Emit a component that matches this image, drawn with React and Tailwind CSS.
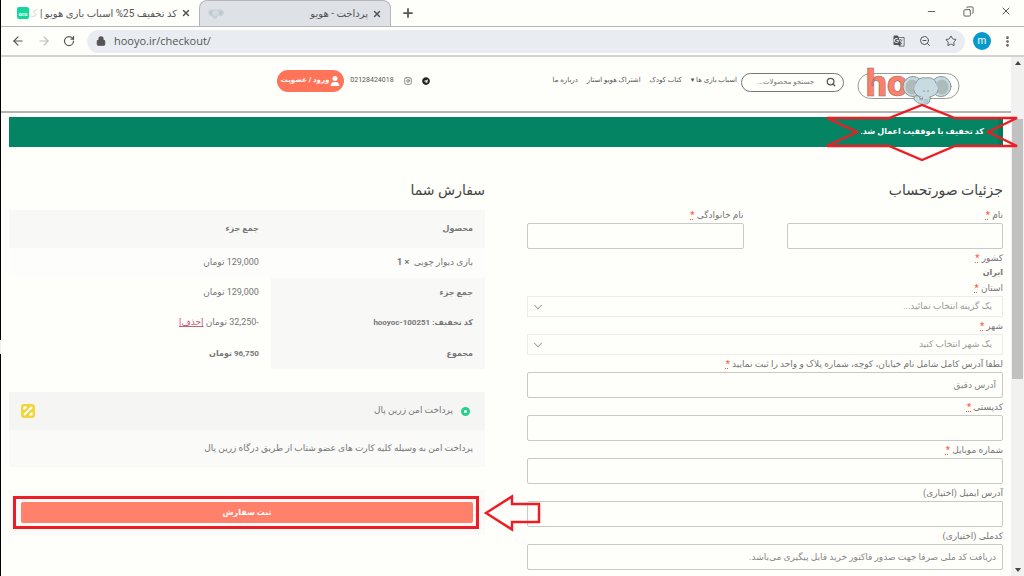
import { Search, Lock, Star, ArrowLeft, ArrowRight, RotateCw, X, Plus, Minus, ZoomOut, MoreVertical, Copy, ChevronDown, Instagram } from "lucide-react";
import { FaTelegram } from "react-icons/fa";
import { MdGTranslate } from "react-icons/md";
import { FaUser } from "react-icons/fa6";

function ElephantMark() {
  return (
    <g stroke="#7d8f95" strokeWidth="0.9" strokeLinejoin="round" strokeLinecap="round">
      <circle cx="56" cy="21.5" r="10" fill="#c8dbe1" />
      <circle cx="84" cy="21.5" r="10" fill="#c8dbe1" />
      <ellipse cx="55" cy="22" rx="6.5" ry="7.5" fill="#adbbbb" stroke="none" />
      <ellipse cx="85" cy="22" rx="6.5" ry="7.5" fill="#adbbbb" stroke="none" />
      <path d="M65 31c1 3 1 4-1 4-1 0-1-1-1-2-1-3-6-3-6 0 0 3 4 5 7 6 5 1 9 0 9-5v-3" fill="#c8dbe1" />
      <path d="M57 25c0-3 2-5 2-7 1-4 6-6 10-5 5-1 9 1 10 5 0 2 2 4 2 7 0 5-6 7-12 7s-12-2-12-7z" fill="#c8dbe1" stroke="none" />
      <path d="M59 18c1-4 6-6 10-5 5-1 9 1 10 5M57 25c0 3 3 6 7 7M81 25c0 3-4 6-8 7" fill="none" />
      <path d="M67 35h4M67 37h4" strokeWidth="0.5" />
      <circle cx="67" cy="26" r="0.6" fill="#444" stroke="none" />
      <circle cx="71" cy="26" r="0.6" fill="#444" stroke="none" />
    </g>
  );
}

function Logo() {
  return (
    <svg viewBox="0 0 104 42" className="h-[42px] w-[104px] overflow-visible" role="img" aria-label="hooyo">
      <rect x="1" y="8.5" width="101" height="25" rx="12.5" fill="none" stroke="#9a9a98" />
      <text x="9" y="31" direction="ltr" fontFamily="Roboto, sans-serif" fontWeight="900" fontSize="37" fill="#ff7f6a" stroke="#8c7772" strokeWidth="0.6">ho</text>
      <ElephantMark />
    </svg>
  );
}

function BrowserChrome() {
  return (
    <header className="shrink-0 text-[#555]">
      <div className="flex h-[27px] border-b border-[#b5b7ba]">
        <div className="flex w-[198px] items-center gap-1 ps-4 pe-2">
          <span className="flex h-3 w-3 shrink-0 items-center justify-center rounded-xs bg-[#12d69c] text-[6px] font-bold text-white">oro</span>
          <span dir="rtl" className="min-w-0 flex-1 whitespace-nowrap text-[10px]">کد تخفیف 25% اسباب بازی هویو | <span className="text-[#ddd]">ک</span></span>
          <button aria-label="Close tab"><X size={10} strokeWidth={3.5} /></button>
        </div>
        <div className="flex w-[192px] items-center gap-1 rounded-t-lg border border-b-0 border-[#b5b7ba] bg-[#dee1e6] px-2">
          <svg viewBox="44 10 52 32" className="h-3 w-4 opacity-60"><ElephantMark /></svg>
          <span dir="rtl" className="flex-1 text-[10px]">پرداخت - هویو</span>
          <button aria-label="Close tab"><X size={10} strokeWidth={3.5} /></button>
        </div>
        <button aria-label="New tab" className="ms-[10px]"><Plus size={14} strokeWidth={3} /></button>
        <div className="ms-auto mb-1 flex items-center gap-[26px] pe-3">
          <button aria-label="Minimize"><Minus size={11} /></button>
          <button aria-label="Restore"><Copy size={11} className="-scale-x-100" /></button>
          <button aria-label="Close"><X size={12} strokeWidth={2} /></button>
        </div>
      </div>
      <div className="flex h-[30px] items-center gap-3 border-b-2 border-[#d2d3d2] ps-[10px] pe-[10px]">
        <button aria-label="Back"><ArrowLeft size={14} /></button>
        <button aria-label="Forward" className="text-[#bbb]"><ArrowRight size={14} /></button>
        <button aria-label="Reload"><RotateCw size={12} strokeWidth={2.5} /></button>
        <div className="flex h-[23px] flex-1 items-center gap-[14px] rounded-full bg-[#e9edf1] ps-[9px] pe-2">
          <label className="flex flex-1 items-center gap-2">
            <Lock size={10} fill="currentColor" strokeWidth={2.5} />
            <input aria-label="Address" defaultValue="hooyo.ir/checkout/" className="min-w-0 flex-1 bg-transparent font-['Open_Sans',sans-serif] text-[11px] outline-none" />
          </label>
          <button aria-label="Translate"><MdGTranslate size={12} /></button>
          <button aria-label="Zoom"><ZoomOut size={12} /></button>
          <button aria-label="Bookmark"><Star size={12} /></button>
        </div>
        <div className="flex items-center gap-[10px] -ms-1">
          <button aria-label="Profile" className="h-[18px] w-[18px] rounded-full bg-[#0699c9] text-[10px] leading-none text-white">m</button>
          <button aria-label="Menu"><MoreVertical size={13} strokeWidth={3} /></button>
        </div>
      </div>
    </header>
  );
}

function SiteHeader() {
  return (
    <div className="flex h-14 items-center border-b-2 border-[#b4b4b3] ps-[50px] pe-[50px] pb-1 text-[7px] text-[#555]">
      <div className="pt-2"><Logo /></div>
      <form className="ms-[13px] flex h-[19px] w-[103px] items-center gap-3 rounded-full border border-[#777] ps-[7px] pe-2">
        <button type="button" aria-label="جستجو"><Search size={10} strokeWidth={3} /></button>
        <input aria-label="جستجو" placeholder="جستجو محصولات..." className="w-full min-w-0 bg-transparent outline-none placeholder:text-[#777]" />
      </form>
      <nav className="ms-1 flex gap-[9px] whitespace-nowrap pb-[3px]">
        <a href="#toys">اسباب بازی ها ▾</a>
        <a href="#books">کتاب کودک</a>
        <a href="#star">اشتراک هویو استار</a>
        <a href="#about">درباره ما</a>
      </nav>
      <div className="ms-[123px] flex items-center gap-[10px] whitespace-nowrap pb-[3px]">
        <a href="#telegram" aria-label="Telegram"><FaTelegram size={8} color="#222" /></a>
        <a href="#instagram" aria-label="Instagram"><Instagram size={8} /></a>
        <a href="tel:02128424018">02128424018</a>
        <a href="#login" className="-ms-1 flex h-[22px] items-center gap-px rounded-full bg-[#ff7359] px-1 font-bold text-white"><FaUser size={10} />ورود / عضویت</a>
      </div>
    </div>
  );
}

function Required() {
  return <abbr title="ضروری" className="font-bold text-[#ff5a36]">*</abbr>;
}

function Field({ id, label, required, placeholder }) {
  return (
    <div className="min-w-0 flex-1">
      <label htmlFor={id} className="block h-[17px] leading-[18px]">{label} {required && <Required />}</label>
      <input id={id} placeholder={placeholder} className="block h-[26px] w-full rounded-xs border border-[#c8cac8] bg-transparent px-[6px] outline-none placeholder:text-[#888]" />
    </div>
  );
}

function SelectField({ id, label, option }) {
  return (
    <div>
      <label htmlFor={id} className="block h-[17px] leading-[18px]">{label} <Required /></label>
      <div className="grid items-center">
        <select id={id} className="col-start-1 row-start-1 h-[21px] w-full appearance-none border border-[#ecedeb] bg-transparent px-[10px] text-[#999]">
          <option>{option}</option>
        </select>
        <ChevronDown size={14} strokeWidth={1.8} className="pointer-events-none col-start-1 row-start-1 me-1 justify-self-end text-[#999]" />
      </div>
    </div>
  );
}

function Billing() {
  return (
    <section className="min-w-0 flex-1">
      <h2 className="h-[33px] text-sm leading-[35px] text-[#444]">جزئیات صورتحساب</h2>
      <div className="flex gap-[43px]">
        <Field id="first" label="نام" required />
        <Field id="last" label="نام خانوادگی" required />
      </div>
      <p className="h-[17px] leading-[18px]">کشور <Required /></p>
      <p className="h-[13px] text-[8px] font-bold leading-[13px]">ایران</p>
      <SelectField id="state" label="استان" option="یک گزینه انتخاب نمائید..." />
      <SelectField id="city" label="شهر" option="یک شهر انتخاب کنید" />
      <Field id="address" label="لطفا آدرس کامل شامل نام خیابان، کوچه، شماره پلاک و واحد را ثبت نمایید" required placeholder="آدرس دقیق" />
      <Field id="postcode" label="کدپستی " required />
      <Field id="mobile" label="شماره موبایل" required />
      <Field id="email" label="آدرس ایمیل (اختیاری)" />
      <Field id="national" label="کدملی (اختیاری)" placeholder="دریافت کد ملی صرفا جهت صدور فاکتور خرید قابل پیگیری می‌باشد." />
    </section>
  );
}

function Order() {
  return (
    <section className="min-w-0 flex-1">
      <h2 className="h-[37px] text-sm leading-[35px] text-[#444]">سفارش شما</h2>
      <table className="w-full table-fixed text-start [&_th]:text-[8px]">
        <thead>
          <tr className="h-[38px] bg-[#f8f8f6] [&>th]:px-3 [&>th]:text-start">
            <th className="w-[45%]">محصول</th>
            <th>جمع جزء</th>
          </tr>
        </thead>
        <tbody>
          <tr className="h-[30px] bg-[#fdfdfb] [&>td]:px-3">
            <td>بازی دیوار چوبی &nbsp;<b>× 1</b></td>
            <td>129,000 تومان</td>
          </tr>
        </tbody>
        <tfoot className="[&_td]:px-3 [&_th]:bg-[#f8f8f6] [&_th]:px-3 [&_th]:text-start">
          <tr className="h-[30px]"><th>جمع جزء</th><td>129,000 تومان</td></tr>
          <tr className="h-[30px]"><th>کد تخفیف: hooyoc-100251</th><td>-32,250 تومان <a href="#remove" className="text-[#c9607c] underline">[حذف]</a></td></tr>
          <tr className="h-[31px]"><th>مجموع</th><td className="text-[8px] font-bold">96,750 تومان</td></tr>
        </tfoot>
      </table>
      <div className="mt-[23px] bg-[#fafaf8]">
        <div className="flex h-[38px] items-center bg-[#f5f5f3] ps-[15px] pe-3">
          <input id="zarinpal" type="radio" name="payment" defaultChecked className="h-[9px] w-[9px] appearance-none rounded-full border-[3px] border-[#27cf8d] bg-white" />
          <label htmlFor="zarinpal" className="ms-2">پرداخت امن زرین پال</label>
          <svg viewBox="0 0 14 14" className="ms-auto h-[14px] w-[14px]">
            <rect width="14" height="14" rx="3" fill="#f0d63c" />
            <path d="M3.5 10.5L10.5 3.5" stroke="white" strokeWidth="2" strokeLinecap="round" />
            <path d="M2.5 2.5h3.500c-.3 1.700-1.800 3.200-3.500 3.500zM11.500 11.500h-3.500c.3-1.700 1.800-3.200 3.500-3.500z" fill="white" />
          </svg>
        </div>
        <p className="h-[37px] px-3 leading-[37px]">پرداخت امن به وسیله کلیه کارت های عضو شتاب از طریق درگاه زرین پال</p>
      </div>
      <div className="mt-[23px] bg-[#fafaf8] px-3 py-3">
        <div className="relative">
          <button className="block h-[21px] w-full rounded-xs bg-[#ff806b] text-[8px] font-bold text-white">ثبت سفارش</button>
          <div className="pointer-events-none absolute -inset-y-[6px] -left-2 -right-[6px] border-[3px] border-[#ee1c25]" />
          <svg viewBox="0 0 58 38" className="pointer-events-none absolute -right-[68px] -top-2 h-[38px] w-[58px]" aria-hidden="true">
            <path d="M3 19L29 2.500V10H56V28H29V35.500Z" fill="none" stroke="#ee1c25" strokeWidth="2.400" />
          </svg>
        </div>
      </div>
    </section>
  );
}

function Scrollbar() {
  return (
    <div aria-hidden="true" className="flex w-[13px] shrink-0 flex-col items-center bg-[#f1f1f1] py-1">
      <svg viewBox="0 0 6 4" className="h-1 w-[6px]"><path d="M0 4L3 0L6 4Z" fill="#444" /></svg>
      <div className="flex w-[11px] flex-1 flex-col pt-[54px] pb-2">
        <div className="h-[59%] bg-[#c1c1c1]" />
      </div>
      <svg viewBox="0 0 6 4" className="h-1 w-[6px]"><path d="M0 0L3 4L6 0Z" fill="#444" /></svg>
    </div>
  );
}

function WindowEdge() {
  return (
    <div aria-hidden="true" className="flex w-px shrink-0 flex-col">
      <div className="flex-[340] bg-black" />
      <div className="flex-[14] bg-[#eee]" />
      <div className="flex-[222] bg-black" />
    </div>
  );
}

export default function App() {
  return (
    <div className="flex h-screen overflow-hidden bg-[#fefefb] font-[Roboto,'DejaVu_Sans',sans-serif]">
      <WindowEdge />
      <div className="flex min-w-0 flex-1 flex-col">
        <BrowserChrome />
        <div className="flex min-h-0 flex-1">
          <main dir="rtl" className="min-w-0 flex-1 text-[9px] text-[#777]">
            <SiteHeader />
            <div className="px-2 pt-1">
              <div role="alert" className="relative flex h-[30px] items-center border-s-[5px] border-[#007a58] bg-[#048463] ps-[14px] text-[8px] font-bold text-white">
                کد تخفیف با موفقیت اعمال شد.
                <svg viewBox="0 0 200 60" className="pointer-events-none absolute -right-[25px] -top-[14px] z-10 h-[60px] w-[200px]" aria-hidden="true">
                  <path d="M4 15H66L99 2L132 15H194L165 29L194 43H132L99 57L66 43H4L34 29Z" fill="none" stroke="#ee1c25" strokeWidth="2.400" />
                </svg>
              </div>
              <div className="mt-[26px] flex gap-[42px]">
                <Billing />
                <Order />
              </div>
            </div>
          </main>
          <Scrollbar />
        </div>
      </div>
    </div>
  );
}
